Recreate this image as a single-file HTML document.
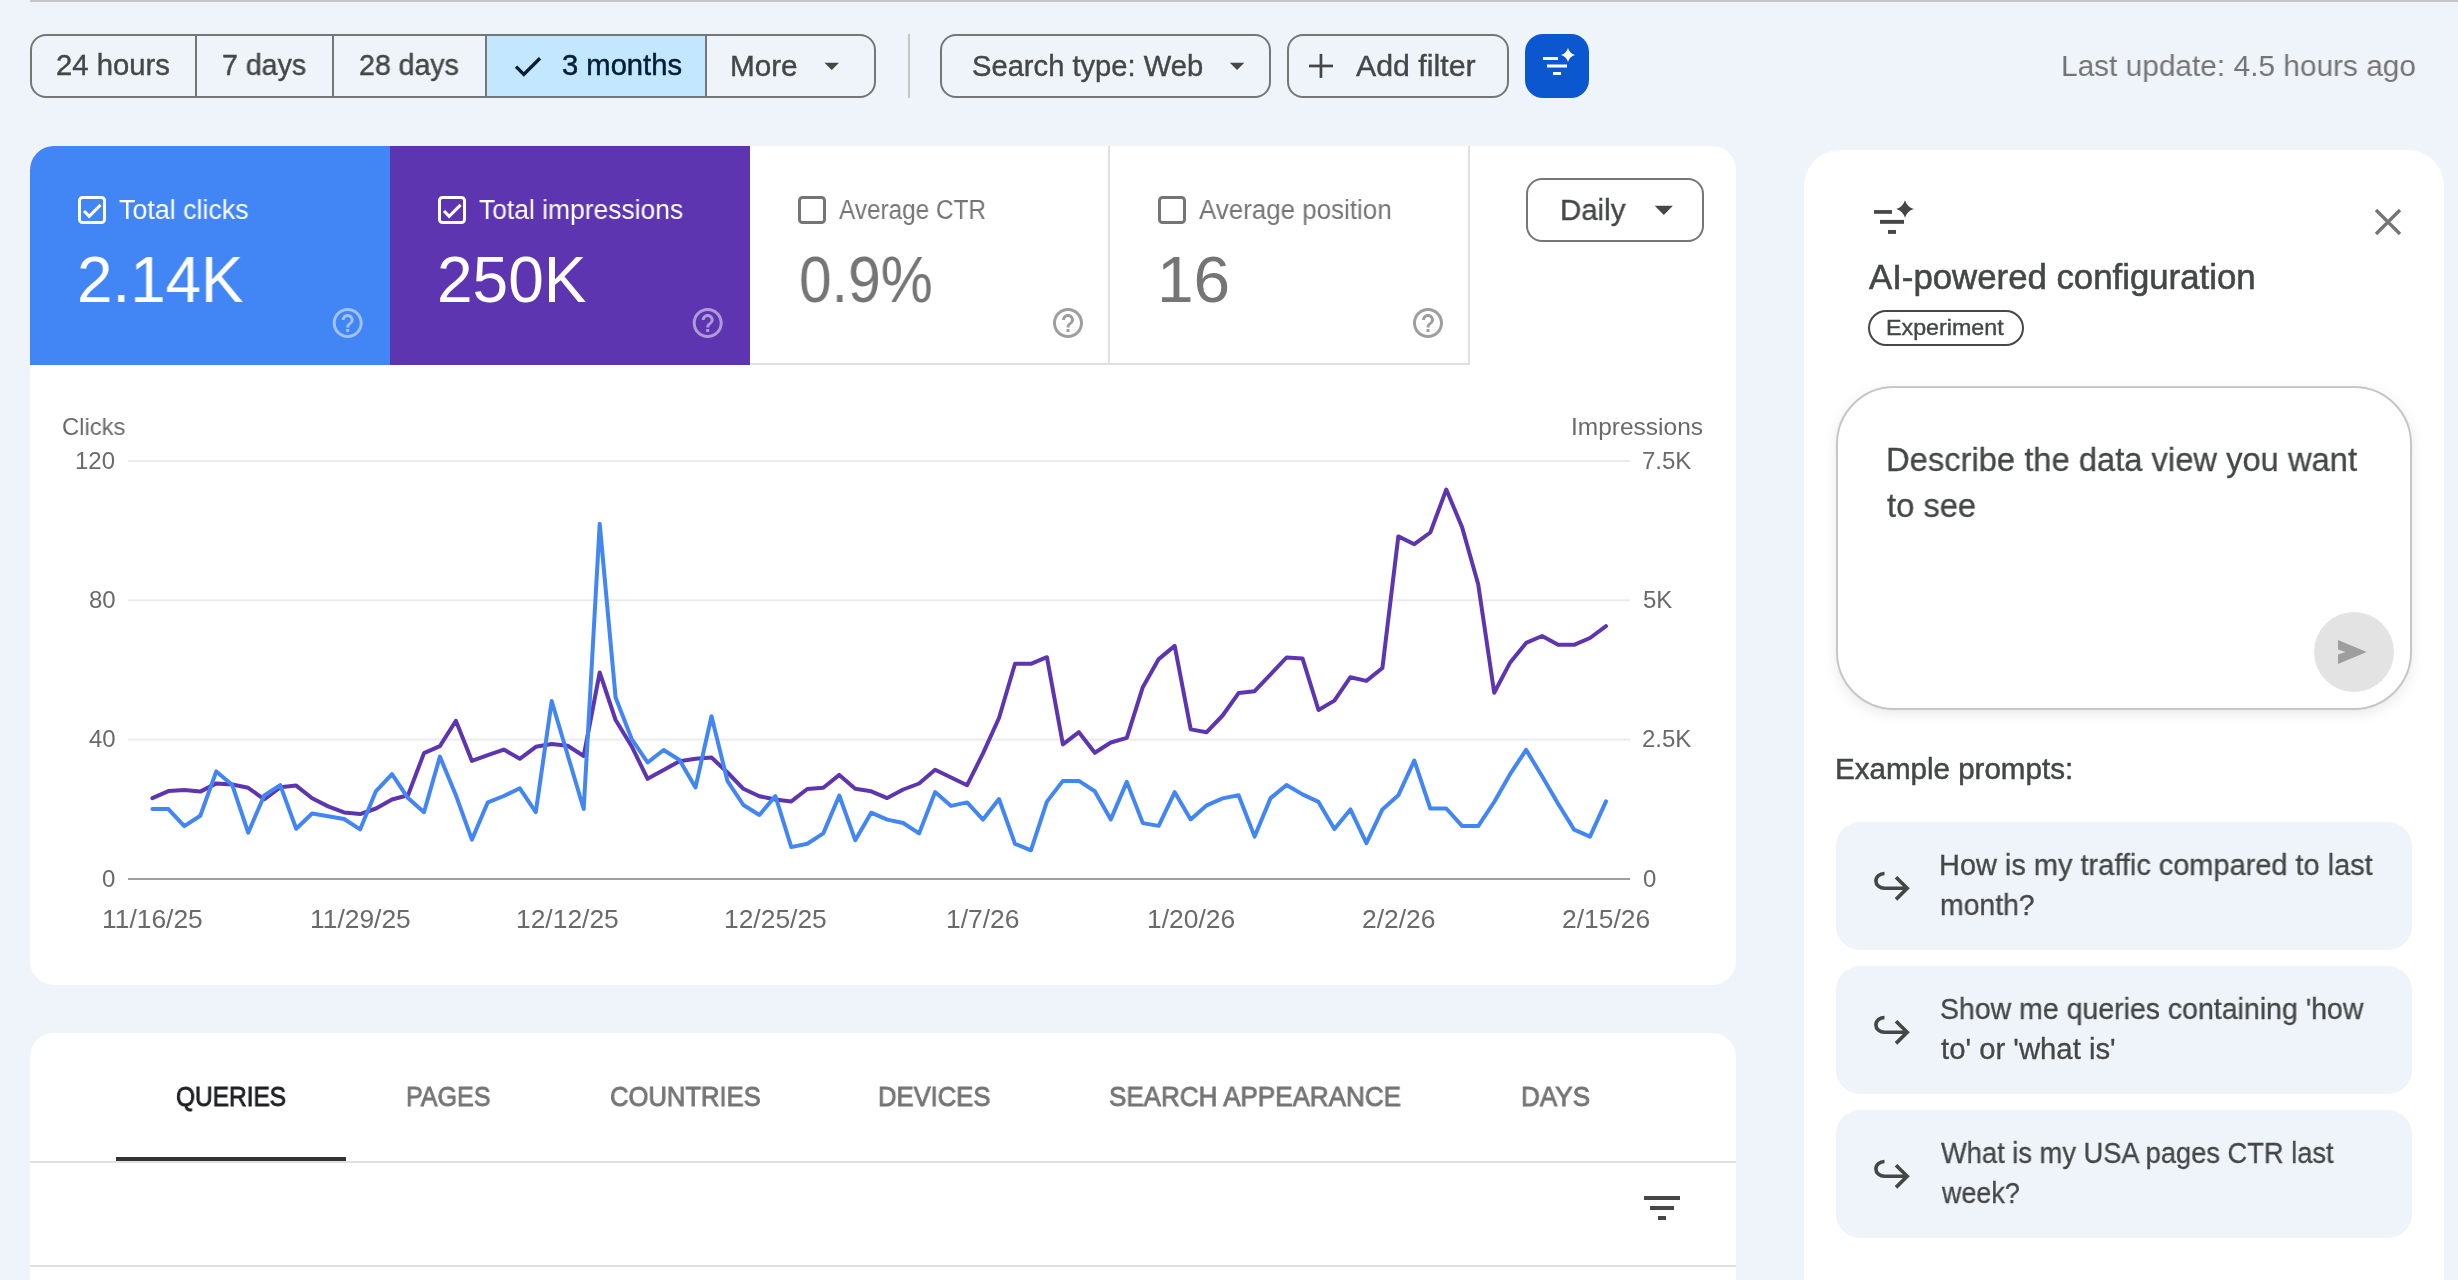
<!DOCTYPE html>
<html><head><meta charset="utf-8"><title>Performance</title>
<style>
html,body{margin:0;padding:0;}
body{width:2458px;height:1280px;overflow:hidden;position:relative;background:#eff3fa;font-family:"Liberation Sans",sans-serif;}
div{box-sizing:border-box;}
.t{will-change:transform;}
svg{position:absolute;left:0;top:0;overflow:visible;}
</style></head><body>
<div style="position:absolute;left:30px;top:0px;width:2428px;height:2px;background:#c4c7c5;"></div>
<div style="position:absolute;left:30px;top:34px;width:846px;height:64px;border:2px solid #747775;border-radius:16px;"></div>
<div style="position:absolute;left:487px;top:36px;width:218px;height:60px;background:#c2e7ff;"></div>
<div style="position:absolute;left:195px;top:34px;width:2px;height:64px;background:#747775;"></div>
<div style="position:absolute;left:332px;top:34px;width:2px;height:64px;background:#747775;"></div>
<div style="position:absolute;left:485px;top:34px;width:2px;height:64px;background:#747775;"></div>
<div style="position:absolute;left:705px;top:34px;width:2px;height:64px;background:#747775;"></div>
<div class="t" style="position:absolute;top:50.98px;font-size:29px;line-height:29px;color:#444746;white-space:nowrap;-webkit-text-stroke:0.4px #444746;left:56.19px;transform:scaleX(1.0084);transform-origin:0 0;">24 hours</div>
<div class="t" style="position:absolute;top:50.98px;font-size:29px;line-height:29px;color:#444746;white-space:nowrap;-webkit-text-stroke:0.4px #444746;left:221.81px;transform:scaleX(0.9841);transform-origin:0 0;">7 days</div>
<div class="t" style="position:absolute;top:50.98px;font-size:29px;line-height:29px;color:#444746;white-space:nowrap;-webkit-text-stroke:0.4px #444746;left:358.81px;transform:scaleX(0.9834);transform-origin:0 0;">28 days</div>
<div class="t" style="position:absolute;top:50.98px;font-size:29px;line-height:29px;color:#001d35;white-space:nowrap;-webkit-text-stroke:0.5px #001d35;left:562.05px;transform:scaleX(1.0060);transform-origin:0 0;">3 months</div>
<div class="t" style="position:absolute;top:51.98px;font-size:29px;line-height:29px;color:#444746;white-space:nowrap;-webkit-text-stroke:0.4px #444746;left:729.76px;transform:scaleX(1.0230);transform-origin:0 0;">More</div>
<div style="position:absolute;left:908px;top:34px;width:2px;height:64px;background:#c4c7c5;"></div>
<div style="position:absolute;left:940px;top:34px;width:331px;height:64px;border:2px solid #747775;border-radius:16px;"></div>
<div class="t" style="position:absolute;top:51.98px;font-size:29px;line-height:29px;color:#444746;white-space:nowrap;-webkit-text-stroke:0.4px #444746;left:972.00px;transform:scaleX(1.0051);transform-origin:0 0;">Search type: Web</div>
<div style="position:absolute;left:1287px;top:34px;width:222px;height:64px;border:2px solid #747775;border-radius:16px;"></div>
<div class="t" style="position:absolute;top:50.98px;font-size:30px;line-height:30px;color:#444746;white-space:nowrap;-webkit-text-stroke:0.4px #444746;left:1356.40px;transform:scaleX(1.0101);transform-origin:0 0;">Add filter</div>
<div style="position:absolute;left:1525px;top:34px;width:64px;height:64px;background:#0b57d0;border-radius:18px;"></div>
<div class="t" style="position:absolute;top:50.98px;font-size:30px;line-height:30px;color:#757575;white-space:nowrap;left:2060.81px;transform:scaleX(0.9945);transform-origin:0 0;">Last update: 4.5 hours ago</div>
<div style="position:absolute;left:30px;top:146px;width:1706px;height:839px;background:#fff;border-radius:24px;"></div>
<div style="position:absolute;left:30px;top:146px;width:360px;height:219px;background:#4285f4;border-top-left-radius:24px;"></div>
<div style="position:absolute;left:390px;top:146px;width:360px;height:219px;background:#5e35b1;"></div>
<div style="position:absolute;left:750px;top:363px;width:720px;height:2px;background:#e0e0e0;"></div>
<div style="position:absolute;left:1108px;top:146px;width:2px;height:219px;background:#e0e0e0;"></div>
<div style="position:absolute;left:1468px;top:146px;width:2px;height:219px;background:#e0e0e0;"></div>
<div class="t" style="position:absolute;top:197.02px;font-size:27px;line-height:27px;color:#fff;white-space:nowrap;left:118.80px;transform:scaleX(0.9936);transform-origin:0 0;">Total clicks</div>
<div class="t" style="position:absolute;top:197.02px;font-size:27px;line-height:27px;color:#fff;white-space:nowrap;left:479.10px;transform:scaleX(0.9790);transform-origin:0 0;">Total impressions</div>
<div class="t" style="position:absolute;top:197.02px;font-size:27px;line-height:27px;color:#757575;white-space:nowrap;left:838.50px;transform:scaleX(0.9018);transform-origin:0 0;">Average CTR</div>
<div class="t" style="position:absolute;top:197.02px;font-size:27px;line-height:27px;color:#757575;white-space:nowrap;left:1198.50px;transform:scaleX(0.9603);transform-origin:0 0;">Average position</div>
<div class="t" style="position:absolute;top:248.00px;font-size:64px;line-height:64px;color:#fff;white-space:nowrap;left:76.71px;transform:scaleX(0.9953);transform-origin:0 0;">2.14K</div>
<div class="t" style="position:absolute;top:248.00px;font-size:64px;line-height:64px;color:#fff;white-space:nowrap;left:437.00px;transform:scaleX(1.0001);transform-origin:0 0;">250K</div>
<div class="t" style="position:absolute;top:248.00px;font-size:64px;line-height:64px;color:#757575;white-space:nowrap;left:799.47px;transform:scaleX(0.9171);transform-origin:0 0;">0.9%</div>
<div class="t" style="position:absolute;top:248.00px;font-size:64px;line-height:64px;color:#757575;white-space:nowrap;left:1157.09px;transform:scaleX(1.0280);transform-origin:0 0;">16</div>
<div style="position:absolute;left:1526px;top:178px;width:178px;height:64px;border:2px solid #747775;border-radius:16px;"></div>
<div class="t" style="position:absolute;top:194.98px;font-size:30px;line-height:30px;color:#444746;white-space:nowrap;-webkit-text-stroke:0.4px #444746;left:1560.24px;transform:scaleX(0.9803);transform-origin:0 0;">Daily</div>
<div class="t" style="position:absolute;top:415.01px;font-size:24px;line-height:24px;color:#6a6a6a;white-space:nowrap;left:62.01px;transform:scaleX(0.9905);transform-origin:0 0;">Clicks</div>
<div class="t" style="position:absolute;top:415.01px;font-size:24px;line-height:24px;color:#6a6a6a;white-space:nowrap;left:1570.96px;transform:scaleX(1.0206);transform-origin:0 0;">Impressions</div>
<div class="t" style="position:absolute;top:449.01px;font-size:24px;line-height:24px;color:#6a6a6a;white-space:nowrap;left:75.30px;">120</div>
<div class="t" style="position:absolute;top:588.01px;font-size:24px;line-height:24px;color:#6a6a6a;white-space:nowrap;left:88.65px;">80</div>
<div class="t" style="position:absolute;top:727.01px;font-size:24px;line-height:24px;color:#6a6a6a;white-space:nowrap;left:88.65px;">40</div>
<div class="t" style="position:absolute;top:867.01px;font-size:24px;line-height:24px;color:#6a6a6a;white-space:nowrap;left:102.00px;">0</div>
<div class="t" style="position:absolute;top:449.01px;font-size:24px;line-height:24px;color:#6a6a6a;white-space:nowrap;left:1642.00px;">7.5K</div>
<div class="t" style="position:absolute;top:588.01px;font-size:24px;line-height:24px;color:#6a6a6a;white-space:nowrap;left:1643.00px;">5K</div>
<div class="t" style="position:absolute;top:727.01px;font-size:24px;line-height:24px;color:#6a6a6a;white-space:nowrap;left:1642.00px;">2.5K</div>
<div class="t" style="position:absolute;top:867.01px;font-size:24px;line-height:24px;color:#6a6a6a;white-space:nowrap;left:1643.00px;">0</div>
<div class="t" style="position:absolute;top:907.01px;font-size:25px;line-height:25px;color:#6a6a6a;white-space:nowrap;left:101.95px;transform:scaleX(1.0559);transform-origin:0 0;">11/16/25</div>
<div class="t" style="position:absolute;top:907.01px;font-size:25px;line-height:25px;color:#6a6a6a;white-space:nowrap;left:309.61px;transform:scaleX(1.0559);transform-origin:0 0;">11/29/25</div>
<div class="t" style="position:absolute;top:907.01px;font-size:25px;line-height:25px;color:#6a6a6a;white-space:nowrap;left:516.29px;transform:scaleX(1.0559);transform-origin:0 0;">12/12/25</div>
<div class="t" style="position:absolute;top:907.01px;font-size:25px;line-height:25px;color:#6a6a6a;white-space:nowrap;left:723.94px;transform:scaleX(1.0559);transform-origin:0 0;">12/25/25</div>
<div class="t" style="position:absolute;top:907.01px;font-size:25px;line-height:25px;color:#6a6a6a;white-space:nowrap;left:946.28px;transform:scaleX(1.0559);transform-origin:0 0;">1/7/26</div>
<div class="t" style="position:absolute;top:907.01px;font-size:25px;line-height:25px;color:#6a6a6a;white-space:nowrap;left:1146.60px;transform:scaleX(1.0559);transform-origin:0 0;">1/20/26</div>
<div class="t" style="position:absolute;top:907.01px;font-size:25px;line-height:25px;color:#6a6a6a;white-space:nowrap;left:1361.60px;transform:scaleX(1.0559);transform-origin:0 0;">2/2/26</div>
<div class="t" style="position:absolute;top:907.01px;font-size:25px;line-height:25px;color:#6a6a6a;white-space:nowrap;left:1561.91px;transform:scaleX(1.0559);transform-origin:0 0;">2/15/26</div>
<div style="position:absolute;left:30px;top:1033px;width:1706px;height:300px;background:#fff;border-radius:24px;"></div>
<div style="position:absolute;left:30px;top:1161px;width:1706px;height:2px;background:#e0e0e0;"></div>
<div style="position:absolute;left:30px;top:1265px;width:1706px;height:2px;background:#e0e0e0;"></div>
<div style="position:absolute;left:116px;top:1157px;width:230px;height:4px;background:#333;"></div>
<div class="t" style="position:absolute;top:1083.02px;font-size:28px;line-height:28px;color:#202124;white-space:nowrap;-webkit-text-stroke:0.9px #202124;left:176.42px;transform:scaleX(0.8734);transform-origin:0 0;">QUERIES</div>
<div class="t" style="position:absolute;top:1083.02px;font-size:28px;line-height:28px;color:#757575;white-space:nowrap;-webkit-text-stroke:0.9px #757575;left:406.21px;transform:scaleX(0.8950);transform-origin:0 0;">PAGES</div>
<div class="t" style="position:absolute;top:1083.02px;font-size:28px;line-height:28px;color:#757575;white-space:nowrap;-webkit-text-stroke:0.9px #757575;left:609.90px;transform:scaleX(0.9140);transform-origin:0 0;">COUNTRIES</div>
<div class="t" style="position:absolute;top:1083.02px;font-size:28px;line-height:28px;color:#757575;white-space:nowrap;-webkit-text-stroke:0.9px #757575;left:878.38px;transform:scaleX(0.9146);transform-origin:0 0;">DEVICES</div>
<div class="t" style="position:absolute;top:1083.02px;font-size:28px;line-height:28px;color:#757575;white-space:nowrap;-webkit-text-stroke:0.9px #757575;left:1109.49px;transform:scaleX(0.9286);transform-origin:0 0;">SEARCH APPEARANCE</div>
<div class="t" style="position:absolute;top:1083.02px;font-size:28px;line-height:28px;color:#757575;white-space:nowrap;-webkit-text-stroke:0.9px #757575;left:1520.56px;transform:scaleX(0.9310);transform-origin:0 0;">DAYS</div>
<div style="position:absolute;left:1804px;top:150px;width:640px;height:1200px;background:#fff;border-radius:36px;"></div>
<div class="t" style="position:absolute;top:260.02px;font-size:34.5px;line-height:34.5px;color:#444746;white-space:nowrap;-webkit-text-stroke:0.6px #444746;left:1869.10px;transform:scaleX(1.0079);transform-origin:0 0;">AI-powered configuration</div>
<div style="position:absolute;left:1868px;top:310px;width:156px;height:36px;border:2px solid #444746;border-radius:18px;"></div>
<div class="t" style="position:absolute;top:316.98px;font-size:22.5px;line-height:22.5px;color:#444746;white-space:nowrap;-webkit-text-stroke:0.4px #444746;left:1886.17px;transform:scaleX(1.0338);transform-origin:0 0;">Experiment</div>
<div style="position:absolute;left:1836px;top:386px;width:576px;height:324px;border:2px solid #c4c7c5;border-radius:58px;background:#fff;box-shadow:0 4px 14px rgba(0,0,0,0.09);"></div>
<div class="t" style="position:absolute;top:442.99px;font-size:33px;line-height:33px;color:#444746;white-space:nowrap;-webkit-text-stroke:0.3px #444746;left:1885.67px;transform:scaleX(0.9915);transform-origin:0 0;">Describe the data view you want</div>
<div class="t" style="position:absolute;top:488.99px;font-size:33px;line-height:33px;color:#444746;white-space:nowrap;-webkit-text-stroke:0.3px #444746;left:1886.85px;transform:scaleX(0.9905);transform-origin:0 0;">to see</div>
<div style="position:absolute;left:2314px;top:612px;width:80px;height:80px;background:#e3e3e3;border-radius:50%;"></div>
<div class="t" style="position:absolute;top:754.00px;font-size:29.5px;line-height:29.5px;color:#444746;white-space:nowrap;-webkit-text-stroke:0.5px #444746;left:1835.25px;transform:scaleX(1.0016);transform-origin:0 0;">Example prompts:</div>
<div style="position:absolute;left:1836px;top:822px;width:576px;height:128px;background:#eff3fa;border-radius:24px;"></div>
<div class="t" style="position:absolute;top:850.98px;font-size:29px;line-height:29px;color:#444746;white-space:nowrap;-webkit-text-stroke:0.3px #444746;left:1938.95px;transform:scaleX(0.9980);transform-origin:0 0;">How is my traffic compared to last</div>
<div class="t" style="position:absolute;top:890.98px;font-size:29px;line-height:29px;color:#444746;white-space:nowrap;-webkit-text-stroke:0.3px #444746;left:1939.97px;transform:scaleX(0.9781);transform-origin:0 0;">month?</div>
<div style="position:absolute;left:1836px;top:966px;width:576px;height:128px;background:#eff3fa;border-radius:24px;"></div>
<div class="t" style="position:absolute;top:994.98px;font-size:29px;line-height:29px;color:#444746;white-space:nowrap;-webkit-text-stroke:0.3px #444746;left:1939.97px;transform:scaleX(0.9820);transform-origin:0 0;">Show me queries containing 'how</div>
<div class="t" style="position:absolute;top:1034.98px;font-size:29px;line-height:29px;color:#444746;white-space:nowrap;-webkit-text-stroke:0.3px #444746;left:1940.95px;transform:scaleX(1.0098);transform-origin:0 0;">to' or 'what is'</div>
<div style="position:absolute;left:1836px;top:1110px;width:576px;height:128px;background:#eff3fa;border-radius:24px;"></div>
<div class="t" style="position:absolute;top:1138.98px;font-size:29px;line-height:29px;color:#444746;white-space:nowrap;-webkit-text-stroke:0.3px #444746;left:1940.94px;transform:scaleX(0.9407);transform-origin:0 0;">What is my USA pages CTR last</div>
<div class="t" style="position:absolute;top:1178.98px;font-size:29px;line-height:29px;color:#444746;white-space:nowrap;-webkit-text-stroke:0.3px #444746;left:1941.87px;transform:scaleX(0.9271);transform-origin:0 0;">week?</div>
<svg width="2458" height="1280" viewBox="0 0 2458 1280"><rect x="128" y="460" width="1502" height="2" fill="#ebebeb"/><rect x="128" y="599.3" width="1502" height="2" fill="#ebebeb"/><rect x="128" y="738.6" width="1502" height="2" fill="#ebebeb"/><rect x="128" y="878" width="1502" height="2" fill="#9e9e9e"/><polyline points="152.4,798.2 168.4,791.1 184.3,790.0 200.3,791.6 216.3,783.4 232.3,784.5 248.2,787.8 264.2,799.3 280.2,787.3 296.2,785.6 312.1,798.2 328.1,806.4 344.1,812.4 360.1,814.1 376.0,808.5 392.0,799.5 408.0,795.3 424.0,753.1 439.9,746.1 455.9,720.8 471.9,760.9 487.8,755.2 503.8,749.6 519.8,758.8 535.8,746.8 551.7,744.0 567.7,745.8 583.7,756.0 599.7,672.5 615.6,720.0 631.6,746.2 647.6,778.8 663.6,770.0 679.5,761.2 695.5,758.8 711.5,757.5 727.5,772.5 743.4,788.8 759.4,796.2 775.4,799.5 791.3,801.4 807.3,789.0 823.3,787.8 839.3,774.9 855.2,788.7 871.2,791.3 887.2,798.1 903.2,789.5 919.1,783.5 935.1,769.8 951.1,777.5 967.1,785.2 983.0,753.4 999.0,718.0 1015.0,663.8 1030.9,663.8 1046.9,657.2 1062.9,744.4 1078.9,732.2 1094.8,752.8 1110.8,742.5 1126.8,737.8 1142.8,687.2 1158.7,659.1 1174.7,645.9 1190.7,729.4 1206.7,732.2 1222.6,715.5 1238.6,693.1 1254.6,691.2 1270.6,674.4 1286.5,657.5 1302.5,658.4 1318.5,710.0 1334.4,700.6 1350.4,677.2 1366.4,680.9 1382.4,668.0 1398.3,536.4 1414.3,544.2 1430.3,532.5 1446.3,489.5 1462.2,527.6 1478.2,584.3 1494.2,692.7 1510.2,662.4 1526.1,642.9 1542.1,636.0 1558.1,644.8 1574.1,644.8 1590.0,638.0 1606.0,626.2" fill="none" stroke="#5e35b1" stroke-width="4" stroke-linejoin="round" stroke-linecap="round"/><polyline points="152.4,809.1 168.4,809.1 184.3,826.1 200.3,815.7 216.3,771.4 232.3,785.1 248.2,832.7 264.2,795.5 280.2,785.1 296.2,828.8 312.1,813.5 328.1,816.2 344.1,819.0 360.1,829.4 376.0,791.1 392.0,774.2 408.0,798.1 424.0,812.2 439.9,756.6 455.9,795.3 471.9,839.6 487.8,802.3 503.8,796.0 519.8,788.3 535.8,812.2 551.7,701.1 567.7,755.2 583.7,809.0 599.7,523.8 615.6,697.5 631.6,738.8 647.6,762.5 663.6,750.0 679.5,760.0 695.5,787.5 711.5,716.2 727.5,781.2 743.4,805.0 759.4,815.0 775.4,796.0 791.3,847.1 807.3,843.7 823.3,833.4 839.3,795.5 855.2,840.2 871.2,812.7 887.2,819.6 903.2,823.0 919.1,833.4 935.1,792.1 951.1,805.9 967.1,802.4 983.0,819.6 999.0,799.0 1015.0,843.8 1030.9,850.3 1046.9,801.6 1062.9,780.9 1078.9,780.9 1094.8,791.2 1110.8,819.4 1126.8,781.9 1142.8,823.1 1158.7,825.9 1174.7,792.2 1190.7,819.4 1206.7,805.3 1222.6,798.4 1238.6,795.3 1254.6,836.6 1270.6,798.1 1286.5,785.0 1302.5,794.4 1318.5,801.9 1334.4,829.1 1350.4,809.4 1366.4,843.1 1382.4,809.4 1398.3,795.3 1414.3,760.5 1430.3,808.5 1446.3,808.5 1462.2,826.1 1478.2,826.1 1494.2,802.0 1510.2,773.9 1526.1,749.9 1542.1,776.2 1558.1,803.8 1574.1,829.6 1590.0,836.6 1606.0,801.4" fill="none" stroke="#4285f4" stroke-width="4" stroke-linejoin="round" stroke-linecap="round"/><polyline points="516,66.6 523.8,74.4 540,58.2" fill="none" stroke="#001d35" stroke-width="3.4"/><path d="M824.5,62.8 L839.0,62.8 L831.75,70.05 Z" fill="#444746"/><path d="M1229.8,62.8 L1244.3,62.8 L1237.05,70.05 Z" fill="#444746"/><path d="M1654.7,205.8 L1672.9,205.8 L1663.8,214.9 Z" fill="#444746"/><rect x="1309" y="64.6" width="24" height="2.7" fill="#444746"/><rect x="1319.6" y="53.9" width="2.7" height="24" fill="#444746"/><rect x="1543" y="57" width="15" height="3" fill="#fff"/><rect x="1547" y="64.5" width="20" height="3" fill="#fff"/><rect x="1553" y="72" width="8" height="3" fill="#fff"/><path d="M1568,48 Q1569.68,53.32 1575,55 Q1569.68,56.68 1568,62 Q1566.32,56.68 1561,55 Q1566.32,53.32 1568,48 Z" fill="#fff"/><rect x="1874" y="210.1" width="18" height="3.7" fill="#444746"/><rect x="1880" y="219.9" width="24" height="3.9" fill="#444746"/><rect x="1888" y="230" width="8" height="3.9" fill="#444746"/><path d="M1905,200.2 Q1907.112,206.888 1913.8,209 Q1907.112,211.112 1905,217.8 Q1902.888,211.112 1896.2,209 Q1902.888,206.888 1905,200.2 Z" fill="#444746"/><path d="M2376,210 L2400,234 M2400,210 L2376,234" stroke="#757575" stroke-width="3.3"/><rect x="79.5" y="197.5" width="25" height="25" rx="3" fill="none" stroke="#fff" stroke-width="3"/><polyline points="84,211 89.2,216.3 100.6,204.9" fill="none" stroke="#fff" stroke-width="3"/><rect x="439.5" y="197.5" width="25" height="25" rx="3" fill="none" stroke="#fff" stroke-width="3"/><polyline points="444,211 449.2,216.3 460.6,204.9" fill="none" stroke="#fff" stroke-width="3"/><rect x="799.5" y="197.5" width="25" height="25" rx="3" fill="none" stroke="#757575" stroke-width="3"/><rect x="1159.5" y="197.5" width="25" height="25" rx="3" fill="none" stroke="#757575" stroke-width="3"/><path transform="translate(329.7,305) scale(1.5)" d="M11 18h2v-2h-2v2zm1-16C6.48 2 2 6.48 2 12s4.48 10 10 10 10-4.48 10-10S17.52 2 12 2zm0 18c-4.41 0-8-3.59-8-8s3.59-8 8-8 8 3.59 8 8-3.59 8-8 8zm0-14c-2.21 0-4 1.79-4 4h2c0-1.1.9-2 2-2s2 .9 2 2c0 2-3 1.75-3 5h2c0-2.25 3-2.5 3-5 0-2.21-1.79-4-4-4z" fill="rgba(255,255,255,0.5)"/><path transform="translate(689.7,305) scale(1.5)" d="M11 18h2v-2h-2v2zm1-16C6.48 2 2 6.48 2 12s4.48 10 10 10 10-4.48 10-10S17.52 2 12 2zm0 18c-4.41 0-8-3.59-8-8s3.59-8 8-8 8 3.59 8 8-3.59 8-8 8zm0-14c-2.21 0-4 1.79-4 4h2c0-1.1.9-2 2-2s2 .9 2 2c0 2-3 1.75-3 5h2c0-2.25 3-2.5 3-5 0-2.21-1.79-4-4-4z" fill="rgba(255,255,255,0.5)"/><path transform="translate(1050,305) scale(1.5)" d="M11 18h2v-2h-2v2zm1-16C6.48 2 2 6.48 2 12s4.48 10 10 10 10-4.48 10-10S17.52 2 12 2zm0 18c-4.41 0-8-3.59-8-8s3.59-8 8-8 8 3.59 8 8-3.59 8-8 8zm0-14c-2.21 0-4 1.79-4 4h2c0-1.1.9-2 2-2s2 .9 2 2c0 2-3 1.75-3 5h2c0-2.25 3-2.5 3-5 0-2.21-1.79-4-4-4z" fill="#9e9e9e"/><path transform="translate(1410,305) scale(1.5)" d="M11 18h2v-2h-2v2zm1-16C6.48 2 2 6.48 2 12s4.48 10 10 10 10-4.48 10-10S17.52 2 12 2zm0 18c-4.41 0-8-3.59-8-8s3.59-8 8-8 8 3.59 8 8-3.59 8-8 8zm0-14c-2.21 0-4 1.79-4 4h2c0-1.1.9-2 2-2s2 .9 2 2c0 2-3 1.75-3 5h2c0-2.25 3-2.5 3-5 0-2.21-1.79-4-4-4z" fill="#9e9e9e"/><path d="M2338,640 L2366.7,652 L2338,664.1 L2338,654.5 L2345.6,652 L2338,649.6 Z" fill="#9e9e9e"/><path d="M1884.5,873.5 A8.6,7.4 0 0 0 1884.5,888.3 L1907,888.3 M1896,877.2 L1907.2,888.3 L1896,899.4" fill="none" stroke="#444746" stroke-width="3.6"/><path d="M1884.5,1017.5 A8.6,7.4 0 0 0 1884.5,1032.3 L1907,1032.3 M1896,1021.2 L1907.2,1032.3 L1896,1043.4" fill="none" stroke="#444746" stroke-width="3.6"/><path d="M1884.5,1161.5 A8.6,7.4 0 0 0 1884.5,1176.3 L1907,1176.3 M1896,1165.2 L1907.2,1176.3 L1896,1187.4" fill="none" stroke="#444746" stroke-width="3.6"/><rect x="1644" y="1196" width="36" height="4" fill="#444746"/><rect x="1650" y="1206" width="24" height="4" fill="#444746"/><rect x="1658" y="1216" width="8" height="4" fill="#444746"/></svg>
</body></html>
